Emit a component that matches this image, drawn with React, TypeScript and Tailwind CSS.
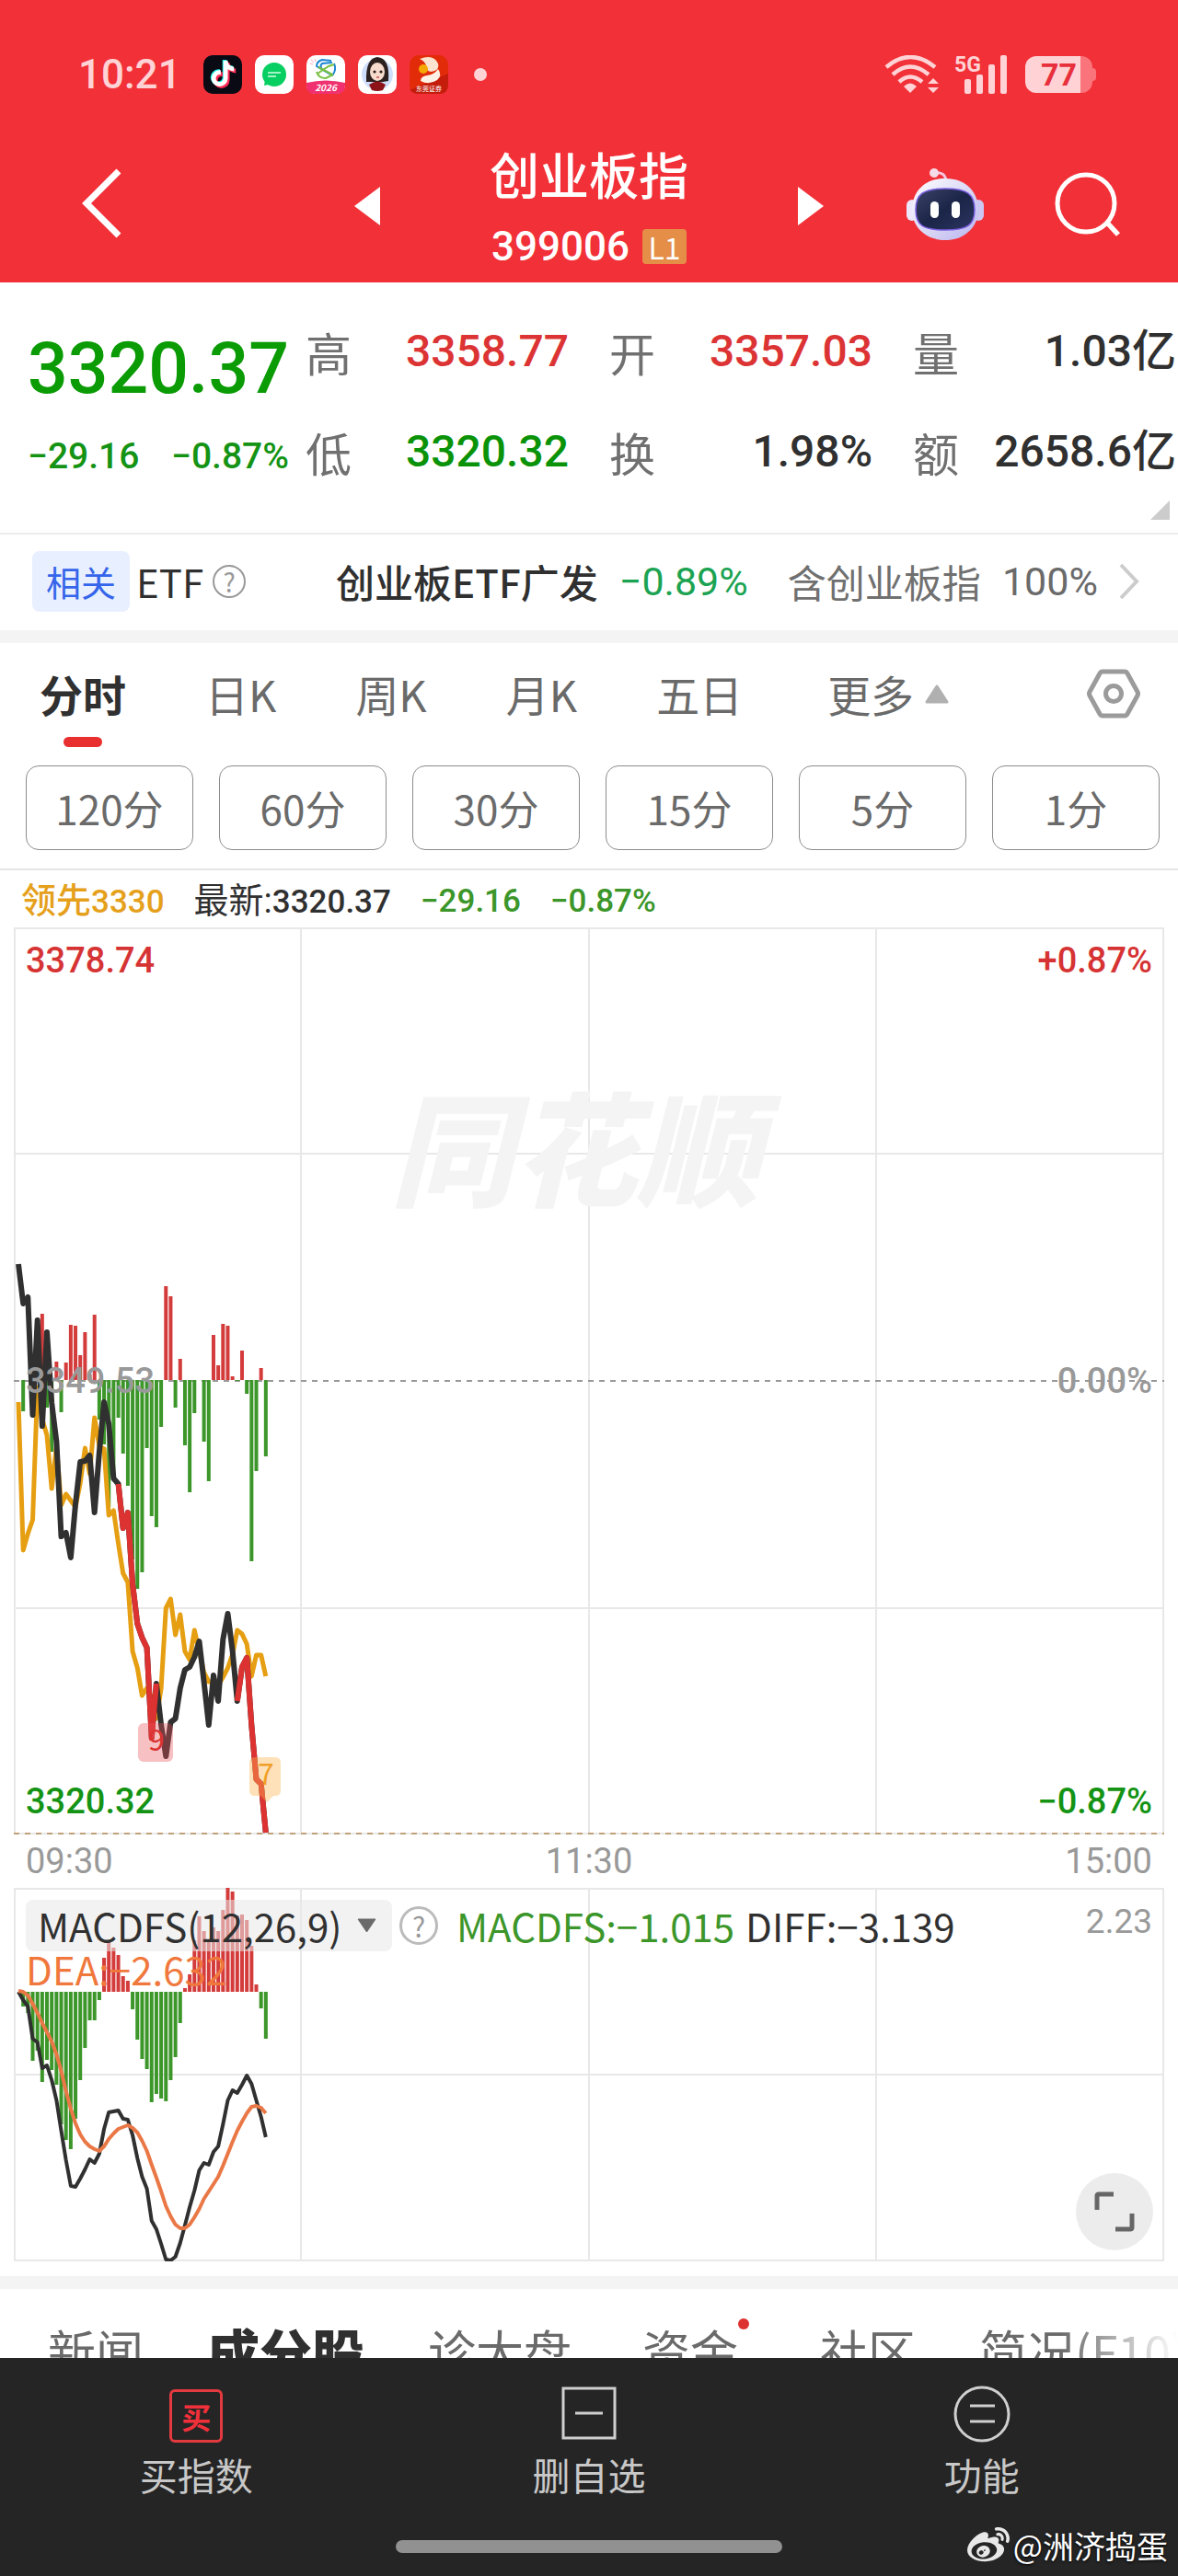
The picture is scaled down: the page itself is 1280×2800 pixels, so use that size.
import { FunctionComponent, JSX, useState } from "react";
import { FaTiktok, FaWeibo } from "react-icons/fa";

const STEP = 5.17;

const quotes = [
  { label: "高", value: "3358.77", color: "text-[#dc3434]" },
  { label: "开", value: "3357.03", color: "text-[#dc3434]" },
  { label: "量", value: "1.03", unit: "亿", color: "text-[#303030]" },
  { label: "低", value: "3320.32", color: "text-[#0a9309]" },
  { label: "换", value: "1.98%", color: "text-[#303030]" },
  { label: "额", value: "2658.6", unit: "亿", color: "text-[#303030]" },
];

const periods = ["分时", "日K", "周K", "月K", "五日"];
const minutes = ["120分", "60分", "30分", "15分", "5分", "1分"];

// one entry per minute, positive above the previous close
const volume = [
  0, -34, 0, 22, 12, 72, -30, -78, 20, -35, 19, 60, 59, 27, 52, 6, 71, -43, -70,
  -138, -106, -41, -80, -115, -195, -227, -209, -74, -148, -160, -51, 102, 91,
  -30, 23, -71, -122, -36, 0, -67, -110, 49, 16, 61, 59, 4, -1, 32, -15, -197,
  -99, 13, -83,
];

const price = [
  366, 409, 402, 530, 427, 542, 440, 517, 559, 662, 658, 685, 627, 581, 580,
  574, 636, 570, 516, 540, 599, 605, 653, 636, 714, 757, 772, 783, 881, 822,
  867, 901, 864, 860, 827, 807, 804, 793, 776, 820, 867, 813, 841, 774, 746,
  787, 841, 804, 794, 867, 926, 931, 984,
];

const lead = [
  516, 677, 659, 644, 500, 535, 552, 610, 564, 628, 616, 623, 630, 604, 566,
  594, 533, 564, 567, 639, 634, 670, 702, 712, 787, 805, 835, 827, 837, 860,
  827, 740, 730, 769, 747, 787, 796, 764, 787, 810, 820, 820, 824, 815, 805,
  790, 764, 768, 779, 814, 791, 791, 814,
];

const macd = [
  0, -16, -23, -75, -64, -98, -74, -85, -101, -144, -161, -171, -138, -96, -61,
  -31, -31, -9, 37, 54, 48, 40, 17, 12, -19, -52, -73, -84, -120, -111, -116,
  -119, -96, -71, -34, 4, 19, 56, 82, 66, 56, 70, 66, 89, 113, 109, 83, 84, 78,
  50, 8, -18, -51,
];

const diff = [
  113, 122, 129, 164, 168, 196, 193, 209, 231, 264, 296, 324, 325, 316, 306,
  295, 299, 289, 262, 244, 243, 242, 251, 252, 269, 294, 314, 327, 362, 371,
  387, 404, 405, 401, 386, 367, 347, 329, 307, 299, 301, 287, 281, 257, 231,
  220, 223, 214, 204, 213, 231, 249, 271,
];

const dea = [
  112, 113, 117, 126, 136, 147, 157, 167, 181, 199, 221, 240, 256, 268, 276,
  281, 284, 286, 281, 273, 267, 262, 260, 258, 261, 266, 275, 286, 301, 315,
  330, 346, 357, 366, 370, 370, 366, 358, 349, 338, 330, 322, 314, 302, 289,
  276, 264, 254, 245, 238, 237, 239, 245,
];

const toPoints = (values: number[], from = 0, to = values.length - 1) =>
  values
    .slice(from, to + 1)
    .map((y, i) => `${(5 + (i + from) * STEP).toFixed(1)},${y}`)
    .join(" ");

const Bars: FunctionComponent<{ values: number[]; zero: number }> = ({
  values,
  zero,
}): JSX.Element => (
  <g>
    {values.map((v, i) => (
      <rect
        key={i}
        x={5 + i * STEP - 2}
        y={v > 0 ? zero - v : zero}
        width={4}
        height={Math.abs(v)}
        fill={v > 0 ? "#d43c3c" : "#3c962a"}
      />
    ))}
  </g>
);

const Help: FunctionComponent<{ className: string }> = ({
  className,
}): JSX.Element => (
  <button
    aria-label="说明"
    className={`rounded-full flex items-center justify-center text-[#999] shrink-0 ${className}`}
  >
    ?
  </button>
);

const Notifications: FunctionComponent = (): JSX.Element => (
  <div className="flex flex-row gap-3.5 items-center">
    <div className="relative w-[42px] h-[42px] rounded-[10px] bg-[#090a14] overflow-hidden">
      <FaTiktok className="absolute left-[6px] top-[5px] text-[#25f4ee]" size={28} />
      <FaTiktok className="absolute left-[9px] top-[8px] text-[#fe2c55]" size={28} />
      <FaTiktok className="absolute left-[7px] top-[6px] text-white" size={28} />
    </div>
    <svg className="w-[42px] h-[42px]" viewBox="0 0 42 42">
      <rect width="42" height="42" rx="10" fill="#fff" />
      <circle cx="21" cy="21" r="13" fill="#07cf61" />
      <path d="M11 27l-1 6 8-2z" fill="#07cf61" />
      <path d="M14 19h14M14 23h9" stroke="#d9ffe8" strokeWidth="1.6" />
    </svg>
    <svg className="w-[42px] h-[42px]" viewBox="0 0 42 42">
      <rect width="42" height="42" rx="10" fill="#fff" />
      <path d="M0 30q21-5 42 0v3q0 9-10 9H10Q0 42 0 33z" fill="#f0306f" />
      <g fill="none" strokeWidth="2">
        <path d="M27 6L17 5q-6 2-6 7l17 10M30 9q3 7-2 13" stroke="#1c86d1" />
        <path d="M28 8l-11 1q-3 3 0 6l12 7" stroke="#1c86d1" />
        <path d="M11 18q2 7 10 7l8-4M13 13l15 8" stroke="#7ac143" />
        <path d="M12 20l12-8 6-2" stroke="#7ac143" />
      </g>
      <text x="21" y="39" textAnchor="middle" fontSize="10" fontStyle="italic" fontWeight="700" fill="#fff">
        2026
      </text>
      <path d="M5 5l3 3M9 4l1 3M4 9l3 1" stroke="#f7a8bc" strokeWidth="1" />
    </svg>
    <svg className="w-[42px] h-[42px]" viewBox="0 0 42 42">
      <rect width="42" height="42" rx="10" fill="#fff" />
      <circle cx="21" cy="21" r="17" fill="#cfdffb" />
      <path d="M9 29Q8 3 21 2q14 1 12 26l-6 1H16z" fill="#2c211f" />
      <ellipse cx="21" cy="18" rx="8" ry="10" fill="#f7dccd" />
      <path d="M12 17q2-9 9-11 7 2 10 10Q31 4 21 4q-9 1-9 13z" fill="#2c211f" />
      <circle cx="18" cy="18" r="1.6" fill="#2b1b18" />
      <circle cx="25" cy="18" r="1.6" fill="#2b1b18" />
      <path d="M20 24h3" stroke="#c8474d" strokeWidth="1.4" />
      <path d="M12 32q9-7 18 0l-3 6q-6 2-12 0z" fill="#8c1418" />
    </svg>
    <svg className="w-[42px] h-[42px]" viewBox="0 0 42 42">
      <rect width="42" height="42" rx="10" fill="#e22b08" />
      <path d="M0 38L42 20v12q0 10-10 10H10Q2 42 0 36z" fill="#c41d0c" />
      <path d="M11 4q15-6 20 5 2 8-8 9-6-1-5-7-2-5-7-7z" fill="#fbe3cf" />
      <path d="M12 28q9 5 18-1 6-5 1-12-4 6-12 7-7 1-7 6z" fill="#fdf0e4" />
      <circle cx="15" cy="15" r="5" fill="#f5a800" />
      <text x="21" y="39" textAnchor="middle" fontSize="7" fill="#fff">
        东莞证券
      </text>
    </svg>
    <span className="w-3.5 h-3.5 ml-3.5 rounded-full bg-[#ffd3d6]" />
  </div>
);

const StatusBar: FunctionComponent = (): JSX.Element => (
  <div className="flex flex-row items-center justify-between pl-[85px] pr-[89px]">
    <div className="flex flex-row items-center gap-6">
      <span className="font-[Roboto,sans-serif] font-medium text-[44px] leading-[42px] text-[#ffd3d6]">
        10:21
      </span>
      <Notifications />
    </div>
    <div className="flex flex-row items-center gap-4 text-[#ffd3d6]">
      <svg className="w-[60px] h-[42px]" viewBox="0 0 60 42" fill="none">
        <path d="M2 13Q28-9 55 13M9 21Q28 4 48 21M16 29Q28 18 41 29" stroke="currentColor" strokeWidth="4.5" />
        <path d="M28 41l-7-7q7-7 14 0z" fill="currentColor" />
        <path d="M53 25l6 6H47zM53 41l-6-6h12z" fill="currentColor" />
      </svg>
      <svg className="w-[57px] h-[42px] overflow-visible" viewBox="0 0 57 42">
        <text x="0" y="18" fontSize="23" fontWeight="700" fontFamily="Roboto" fill="currentColor">
          5G
        </text>
        <g fill="currentColor">
          <rect x="11" y="26" width="7" height="16" rx="2" />
          <rect x="24" y="21" width="7" height="21" rx="2" />
          <rect x="37" y="10" width="7" height="32" rx="2" />
          <rect x="50" y="0" width="7" height="42" rx="2" />
        </g>
      </svg>
      <div className="flex flex-row items-center ml-1">
        <div className="w-[73px] h-10 rounded-xl bg-[linear-gradient(90deg,#ffd3d6_82%,#f9757b_82%)] flex items-center justify-center font-[Roboto,sans-serif] font-bold text-[34px] text-[#e8303c]">
          77
        </div>
        <span className="w-1 h-3.5 rounded-r bg-[#f9757b]" />
      </div>
    </div>
  </div>
);

const Header: FunctionComponent = (): JSX.Element => (
  <header className="bg-[#f23038] text-white pt-[60px] pb-3.5">
    <StatusBar />
    <div className="grid grid-cols-[1fr_auto_1fr] items-center mt-[60px]">
      <button aria-label="返回" className="justify-self-start ml-[88px] mb-3.5">
        <svg className="w-11 h-[76px]" viewBox="0 0 44 76" fill="none">
          <path d="M41 3L6 38l35 35" stroke="#fff" strokeWidth="7" />
        </svg>
      </button>
      <div className="flex flex-row items-center gap-[119px]">
        <button aria-label="上一个" className="mb-2">
          <svg className="w-7 h-[42px]" viewBox="0 0 28 42">
            <path d="M28 0v42L0 21z" fill="#fff" />
          </svg>
        </button>
        <div className="flex flex-col items-center gap-[27px]">
          <h1 className="font-medium text-[54px] leading-[54px]">创业板指</h1>
          <div className="flex flex-row items-center gap-3.5">
            <span className="font-[Roboto,sans-serif] font-medium text-[44px] leading-[50px]">
              399006
            </span>
            <span className="w-12 h-[38px] rounded-sm bg-[#e48e48] flex items-center justify-center text-[32px]">
              L1
            </span>
          </div>
        </div>
        <button aria-label="下一个" className="mb-2">
          <svg className="w-7 h-[42px]" viewBox="0 0 28 42">
            <path d="M0 0v42l28-21z" fill="#fff" />
          </svg>
        </button>
      </div>
      <div className="flex flex-row items-center justify-between pl-[90px] pr-[62px] mb-3">
        <button aria-label="智能助手">
          <svg className="w-[84px] h-[78px]" viewBox="0 0 84 78">
            <defs>
              <linearGradient id="shell" x1="0" y1="0" x2="1" y2="1">
                <stop offset="0" stopColor="#fff" />
                <stop offset="1" stopColor="#b9b4ee" />
              </linearGradient>
              <linearGradient id="visor" x1="0" y1="0" x2="1" y2="1">
                <stop offset="0" stopColor="#3b4468" />
                <stop offset="0.5" stopColor="#1b2547" />
                <stop offset="1" stopColor="#2b3562" />
              </linearGradient>
            </defs>
            <path d="M30 5q12-2 13 9" stroke="#f3c6dc" strokeWidth="3" fill="none" />
            <circle cx="30" cy="5" r="5" fill="#f6dbe9" />
            <rect x="0" y="34" width="12" height="23" rx="6" fill="#ece6fa" />
            <rect x="72" y="34" width="12" height="23" rx="6" fill="#cdc5f2" />
            <path d="M42 11c24 0 36 16 36 34S64 78 42 78 6 63 6 45s12-34 36-34z" fill="url(#shell)" />
            <path d="M42 22c24 0 32 6 32 23S66 67 42 67 10 62 10 45s8-23 32-23z" fill="url(#visor)" stroke="#7b5fe0" strokeWidth="1.5" />
            <rect x="26" y="36" width="9" height="18" rx="4.5" fill="#fff" />
            <rect x="49" y="36" width="9" height="18" rx="4.5" fill="#fff" />
          </svg>
        </button>
        <button aria-label="搜索">
          <svg className="w-[72px] h-[72px]" viewBox="0 0 72 72" fill="none" stroke="#fff" strokeWidth="5">
            <circle cx="34" cy="35" r="31" />
            <path d="M57 56l12 13" strokeWidth="5.5" />
          </svg>
        </button>
      </div>
    </div>
  </header>
);

const Quote: FunctionComponent = (): JSX.Element => (
  <section className="relative flex flex-row gap-[18px] pl-[30px] pr-[2px] pt-[50px] pb-[63px] border-b-2 border-[#ececec] bg-white">
    <div className="font-[Roboto,sans-serif] font-medium flex flex-col justify-between shrink-0">
      <span className="text-[77px] leading-[88px] text-[#0a9b05]">3320.37</span>
      <div className="flex flex-row justify-between text-[39px] leading-[39px] text-[#149314]">
        <span>−29.16</span>
        <span>−0.87%</span>
      </div>
    </div>
    <div className="grid grid-cols-3 gap-x-11 gap-y-[59px] flex-1">
      {quotes.map((q) => (
        <div
          key={q.label}
          className="flex flex-row items-center justify-between leading-[50px]"
        >
          <span className="text-[50px] text-[#707070]">{q.label}</span>
          <span className={`font-medium text-[48px] font-[Roboto,'Noto_Sans_CJK_SC',sans-serif] ${q.color}`}>
            {q.value}
            {q.unit}
          </span>
        </div>
      ))}
    </div>
    <svg className="absolute right-[9px] bottom-3.5 w-[21px] h-[21px]" viewBox="0 0 21 21">
      <path d="M21 0v21H0z" fill="#ccc" />
    </svg>
  </section>
);

const Related: FunctionComponent = (): JSX.Element => (
  <section className="flex flex-row items-center pl-[35px] pr-[42px] pt-[18px] pb-5 bg-white text-[42px] leading-[66px] border-b-[14px] border-[#f4f4f4]">
    <span className="rounded-lg bg-[#e8efff] text-[#3565ea] text-[38px] px-[15px]">
      相关
    </span>
    <span className="ml-[7px] text-[#303030]">ETF</span>
    <Help className="ml-2.5 w-9 h-9 border-2 border-[#999] text-[28px] leading-none" />
    <a href="#etf" className="flex flex-row flex-1 items-center justify-between ml-[98px]">
      <span className="font-medium text-[#303030]">创业板ETF广发</span>
      <span className="font-[Roboto,sans-serif] text-[43px] text-[#1ba352]">
        −0.89%
      </span>
      <span className="ml-5 text-[#707070]">含创业板指</span>
      <span className="font-[Roboto,sans-serif] text-[43px] text-[#6a6a6a]">
        100%
      </span>
      <svg className="w-[22px] h-10" viewBox="0 0 22 40" fill="none">
        <path d="M2 2l17 18L2 38" stroke="#ccc" strokeWidth="4" />
      </svg>
    </a>
  </section>
);

const Periods: FunctionComponent = (): JSX.Element => {
  const [active, setActive] = useState("分时");
  return (
    <section className="bg-white border-b-2 border-[#e6e6e6] pb-5">
      <div className="flex flex-row items-center gap-[86px] pl-[43px] pr-[41px] pt-5 text-[47px] leading-[70px] text-[#6a6a6a]">
        {periods.map((p) => (
          <button
            key={p}
            onClick={() => setActive(p)}
            className={`relative pb-[23px] cursor-pointer ${
              active === p ? "font-bold text-[#303030]" : "font-normal"
            }`}
          >
            {p}
            {active === p && (
              <span className="absolute left-1/2 -translate-x-1/2 bottom-0 w-[42px] h-[11px] rounded-full bg-[#e93030]" />
            )}
          </button>
        ))}
        <button className="flex flex-row items-center gap-3 pl-1.5 pb-[23px]">
          更多
          <svg className="w-[26px] h-[21px]" viewBox="0 0 26 21">
            <path d="M13 2l11 17H2z" fill="#b0b0b0" stroke="#b0b0b0" strokeWidth="3" strokeLinejoin="round" />
          </svg>
        </button>
        <button aria-label="设置" className="ml-auto pb-[23px]">
          <svg className="w-[58px] h-[54px]" viewBox="0 0 58 54" fill="none" stroke="#9b9b9b" strokeWidth="5" strokeLinejoin="round">
            <path d="M17 3h24q2 0 3 2l11 20q1 2 0 4L44 49q-1 2-3 2H17q-2 0-3-2L3 29q-1-2 0-4L14 5q1-2 3-2z" />
            <circle cx="29" cy="27" r="8.5" />
          </svg>
        </button>
      </div>
      <div className="grid grid-cols-6 gap-7 pl-7 pr-5 pt-[20px]">
        {minutes.map((m) => (
          <button
            key={m}
            className="h-[92px] rounded-[14px] border border-[#8c8c8c] text-[44px] text-[#6a6a6a]"
          >
            {m}
          </button>
        ))}
      </div>
    </section>
  );
};

const TimeChart: FunctionComponent = (): JSX.Element => (
  <section className="bg-white px-[15px]">
    <div className="flex flex-row items-center gap-8 pl-2 pt-2 pb-0.5 text-[35px] leading-[50px] font-medium font-[Roboto,'Noto_Sans_CJK_SC',sans-serif] text-[#3c962a]">
      <span className="text-[#e5a01c]">
        <span className="text-[38px]">领先</span>3330
      </span>
      <span className="text-[#303030]">
        <span className="text-[38px] font-normal">最新:</span>3320.37
      </span>
      <span>−29.16</span>
      <span>−0.87%</span>
    </div>
    <div className="relative">
      <svg className="block w-full h-auto" viewBox="0 0 1250 986" fill="none">
        <g stroke="#e8e8e8" strokeWidth="2">
          <rect x="1" y="1" width="1248" height="984" />
          <path d="M312 0v985M625 0v985M937 0v985M0 246h1250M0 740h1250" />
        </g>
        <text x="409" y="293" fontSize="134" fontWeight="900" fontStyle="italic" fill="#f4f4f4">
          同花顺
        </text>
        <path d="M0 493h1250" stroke="#999" strokeWidth="2" strokeDasharray="6 6" />
        <Bars values={volume} zero={492} />
        <polyline points={toPoints(lead)} stroke="#e69f12" strokeWidth="5" strokeLinejoin="round" />
        <polyline points={toPoints(price)} stroke="#303030" strokeWidth="6" strokeLinejoin="round" />
        <polyline points={toPoints(price, 21, 29)} stroke="#dc3232" strokeWidth="6" strokeLinejoin="round" />
        <polyline points={toPoints(price, 46, 52)} stroke="#dc3232" strokeWidth="6" strokeLinejoin="round" />
        <path d="M0 985h1250" stroke="#c0a078" strokeWidth="2" strokeDasharray="6 6" />
        <rect x="135" y="865" width="38" height="42" rx="6" fill="#e8505a" fillOpacity="0.36" />
        <text x="155" y="895" fontSize="32" textAnchor="middle" fill="#dc3232">
          9
        </text>
        <path d="M262 902h22q6 0 6 6v30q0 6-6 6h-2l-7 7-7-7h-6q-6 0-6-6v-30q0-6 6-6z" fill="#fcb450" fillOpacity="0.4" />
        <text x="274" y="932" fontSize="32" textAnchor="middle" fill="#f0a028">
          7
        </text>
      </svg>
      <div className="absolute inset-0 px-[13px] py-3 flex flex-col justify-between font-[Roboto,sans-serif] font-medium text-[38px] leading-[48px]">
        <div className="flex flex-row justify-between text-[#d63434]">
          <span>3378.74</span>
          <span>+0.87%</span>
        </div>
        <div className="flex flex-row justify-between text-[#999]">
          <span>3349.53</span>
          <span>0.00%</span>
        </div>
        <div className="flex flex-row justify-between text-[#149314]">
          <span>3320.32</span>
          <span>−0.87%</span>
        </div>
      </div>
    </div>
    <div className="flex flex-row justify-between px-[13px] py-1 font-[Roboto,sans-serif] text-[38px] leading-[50px] text-[#999]">
      <span>09:30</span>
      <span>11:30</span>
      <span>15:00</span>
    </div>
  </section>
);

const MacdChart: FunctionComponent = (): JSX.Element => (
  <section className="bg-white px-[15px] pb-4 border-b-[14px] border-[#f4f4f4]">
    <div className="relative">
      <svg className="block w-full h-auto" viewBox="0 0 1250 406" fill="none">
        <g stroke="#e8e8e8" strokeWidth="2">
          <rect x="1" y="1" width="1248" height="404" />
          <path d="M312 0v405M625 0v405M937 0v405M0 203h1250" />
        </g>
        <Bars values={macd} zero={113} />
        <polyline points={toPoints(diff)} stroke="#303030" strokeWidth="4" strokeLinejoin="round" />
        <polyline points={toPoints(dea)} stroke="#ea7846" strokeWidth="4" strokeLinejoin="round" />
      </svg>
      <div className="absolute inset-0 pl-[13px] pr-[13px] pt-[13px] text-[42px] leading-[56px]">
        <div className="flex flex-row items-center">
          <div className="relative">
            <select
              aria-label="指标"
              className="appearance-none w-[398px] h-14 rounded-lg bg-[#e8e8e8]/55 pl-[13px] text-[#303030]"
            >
              <option>MACDFS(12,26,9)</option>
            </select>
            <svg className="absolute right-[17px] top-[20px] w-[21px] h-4 pointer-events-none" viewBox="0 0 21 16">
              <path d="M1 1h19l-9.500 14z" fill="#6a6a6a" stroke="#6a6a6a" strokeLinejoin="round" />
            </svg>
          </div>
          <Help className="ml-2 w-[42px] h-[42px] border-[3px] border-[#bbb] text-[30px] leading-none" />
          <span className="ml-5 text-[#3c962a]">MACDFS:−1.015</span>
          <span className="ml-3 text-[#303030]">DIFF:−3.139</span>
          <span className="ml-auto self-start font-[Roboto,sans-serif] text-[37px] leading-[48px] text-[#999]">
            2.23
          </span>
        </div>
        <div className="text-[#f0783c] leading-[38px]">DEA:−2.632</div>
      </div>
      <button
        aria-label="全屏"
        className="absolute right-3 bottom-3 w-[84px] h-[84px] rounded-full bg-[#ececec] flex items-center justify-center"
      >
        <svg className="w-11 h-11" viewBox="0 0 44 44" fill="none" stroke="#666" strokeWidth="5">
          <path d="M3 20V5q0-2 2-2h16M41 24v15q0 2-2 2H23" />
        </svg>
      </button>
    </div>
  </section>
);

const NewsTabs: FunctionComponent = (): JSX.Element => (
  <nav className="relative flex flex-row items-center gap-[69px] pl-[52px] pt-9 pb-40 overflow-hidden whitespace-nowrap bg-white text-[52px] leading-[62px] text-[#6a6a6a]">
    <a href="#news">新闻</a>
    <a href="#parts" className="font-black text-[57px] text-[#303030]">
      成分股
    </a>
    <a href="#diagnosis">诊大盘</a>
    <a href="#funds" className="relative pl-2 pr-5">
      资金
      <span className="absolute right-2 -top-1 w-3 h-3 rounded-full bg-[#dc3232]" />
    </a>
    <a href="#community">社区</a>
    <a href="#brief">简况(F10)</a>
    <span className="absolute right-0 top-0 w-32 h-full bg-linear-to-r from-white/0 to-white" />
  </nav>
);

const BottomBar: FunctionComponent = (): JSX.Element => (
  <footer className="fixed inset-x-0 bottom-0 bg-[#252525] text-[#c8c8c8] pt-[30px] pb-[25px]">
    <div className="grid grid-cols-3 text-[41px] leading-[60px]">
      <button className="flex flex-col items-center gap-1">
        <span className="w-[58px] h-[58px] mt-1 rounded-md border-[3px] border-[#e33a40] flex items-center justify-center text-[32px] leading-none font-bold text-[#f0303a]">
          买
        </span>
        买指数
      </button>
      <button className="flex flex-col items-center gap-1">
        <svg className="w-[62px] h-[62px]" viewBox="0 0 62 62" fill="none" stroke="#cfcfcf" strokeWidth="3">
          <path d="M3 3h56v54H3zM16 30h30" />
        </svg>
        删自选
      </button>
      <button className="flex flex-col items-center gap-1">
        <svg className="w-[62px] h-[62px]" viewBox="0 0 62 62" fill="none" stroke="#cfcfcf" strokeWidth="3">
          <circle cx="31" cy="31" r="29" />
          <path d="M18 22h27M18 39h27" />
        </svg>
        功能
      </button>
    </div>
    <div className="w-[420px] h-3.5 mx-auto mt-[42px] rounded-full bg-[#919191]" />
    <div className="absolute right-[11px] bottom-2.5 flex flex-row items-center gap-1 text-[34px] leading-[44px] text-white [text-shadow:0_1px_3px_#000]">
      <FaWeibo size={46} className="text-[#e8e8e8]" />
      @洲济捣蛋
    </div>
  </footer>
);

export default function App(): JSX.Element {
  return (
    <div className="w-full min-h-screen bg-white font-['Noto_Sans_CJK_SC',sans-serif]">
      <Header />
      <main>
        <Quote />
        <Related />
        <Periods />
        <TimeChart />
        <MacdChart />
        <NewsTabs />
      </main>
      <BottomBar />
    </div>
  );
}
